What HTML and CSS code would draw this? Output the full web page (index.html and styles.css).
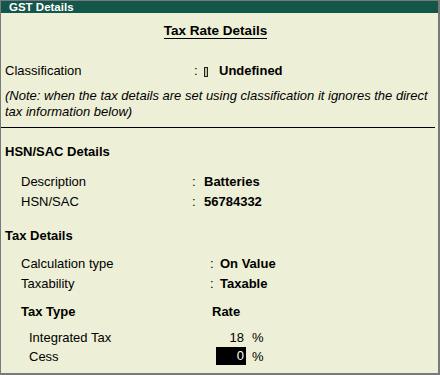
FILE: index.html
```html
<!DOCTYPE html>
<html lang="en">
<head>
  <meta charset="UTF-8">
  <title>GST Details</title>
  <link rel="stylesheet" href="styles.css">
</head>
<body>
  <div class="window">
    <div class="title-bar">GST Details</div>

    <div class="heading"><span>Tax Rate Details</span></div>

    <div class="row classification">
      <span class="label">Classification</span>
      <span class="colon">:</span>
      <span class="marker"></span>
      <span class="value">Undefined</span>
    </div>

    <p class="note">(Note: when the tax details are set using classification it ignores the direct tax information below)</p>

    <hr class="rule">

    <div class="section">HSN/SAC Details</div>
    <div class="group hsn">
      <div class="row">
        <span class="label">Description</span>
        <span class="colon">:</span>
        <span class="value">Batteries</span>
      </div>
      <div class="row">
        <span class="label">HSN/SAC</span>
        <span class="colon">:</span>
        <span class="value">56784332</span>
      </div>
    </div>

    <div class="section">Tax Details</div>
    <div class="group tax">
      <div class="row">
        <span class="label">Calculation type</span>
        <span class="colon">:</span>
        <span class="value">On Value</span>
      </div>
      <div class="row">
        <span class="label">Taxability</span>
        <span class="colon">:</span>
        <span class="value">Taxable</span>
      </div>
    </div>

    <div class="rate-head">
      <span class="label">Tax Type</span>
      <span>Rate</span>
    </div>
    <div class="rates">
      <div class="rate-row">
        <span class="label">Integrated Tax</span>
        <span class="amount">18</span>
        <span class="pct">%</span>
      </div>
      <div class="rate-row">
        <span class="label">Cess</span>
        <span class="amount active">0</span>
        <span class="pct">%</span>
      </div>
    </div>
  </div>
</body>
</html>
```

FILE: styles.css
```css
body {
  margin: 0;
  font-family: "Liberation Sans", Arial, sans-serif;
  font-size: 13px;
  color: black;
}

.window {
  width: 440px;
  height: 375px;
  box-sizing: border-box;
  background-color: #edefd6;
  border-top: 1px solid #7a7a7a;
  border-left: 1px solid #7a7a7a;
  border-right: 2px solid #7a7a7a;
  border-bottom: 2px solid #7a7a7a;
}

.title-bar {
  height: 12px;
  line-height: 12px;
  padding-left: 8px;
  background-color: #13574a;
  color: white;
  font-weight: bold;
  font-size: 11.5px;
}

.heading {
  margin-top: 10px;
  height: 16px;
  line-height: 16px;
  text-align: center;
  padding-right: 8px;
  font-size: 13.5px;
  font-weight: bold;
}

.heading span {
  display: inline-block;
  border-bottom: 1.5px solid black;
  line-height: 14px;
}

.row {
  display: flex;
  height: 20px;
  line-height: 20px;
}

.colon {
  width: 6px;
}

.value {
  font-weight: bold;
}

.classification {
  margin-top: 22px;
  padding-left: 4px;
}

.classification .label {
  width: 189px;
}

.classification .colon {
  width: 10px;
}

.marker {
  width: 2px;
  height: 8px;
  margin: 6px 11px 0 0;
  border: 1px solid #222;
  background: #c9c2a0;
}

.note {
  margin: 7px 0 0;
  padding-left: 4px;
  font-style: italic;
  line-height: 16px;
}

.rule {
  margin: 7px 3px 0 0;
  border: none;
  border-top: 1px solid black;
}

.section {
  margin-top: 16px;
  padding-left: 4px;
  height: 16px;
  line-height: 16px;
  font-weight: bold;
}

.group {
  padding-left: 20px;
}

.hsn {
  margin-top: 12px;
  margin-bottom: 16px;
}

.hsn .label {
  width: 171px;
}

.hsn .colon {
  width: 12px;
}

.tax {
  margin-top: 10px;
}

.tax .label {
  width: 189px;
}

.tax .colon {
  width: 10px;
}

.rate-head {
  display: flex;
  margin-top: 10px;
  padding-left: 20px;
  height: 16px;
  line-height: 16px;
  font-weight: bold;
}

.rate-head .label {
  width: 191px;
}

.rates {
  margin-top: 8px;
  padding-left: 28px;
}

.rate-row {
  display: flex;
  height: 19px;
  line-height: 19px;
}

.rate-row .label {
  width: 187px;
}

.amount {
  width: 30px;
  height: 18px;
  padding-right: 2px;
  box-sizing: border-box;
  text-align: right;
}

.amount.active {
  background-color: black;
  color: white;
  line-height: 18px;
}

.pct {
  margin-left: 6px;
}
```
